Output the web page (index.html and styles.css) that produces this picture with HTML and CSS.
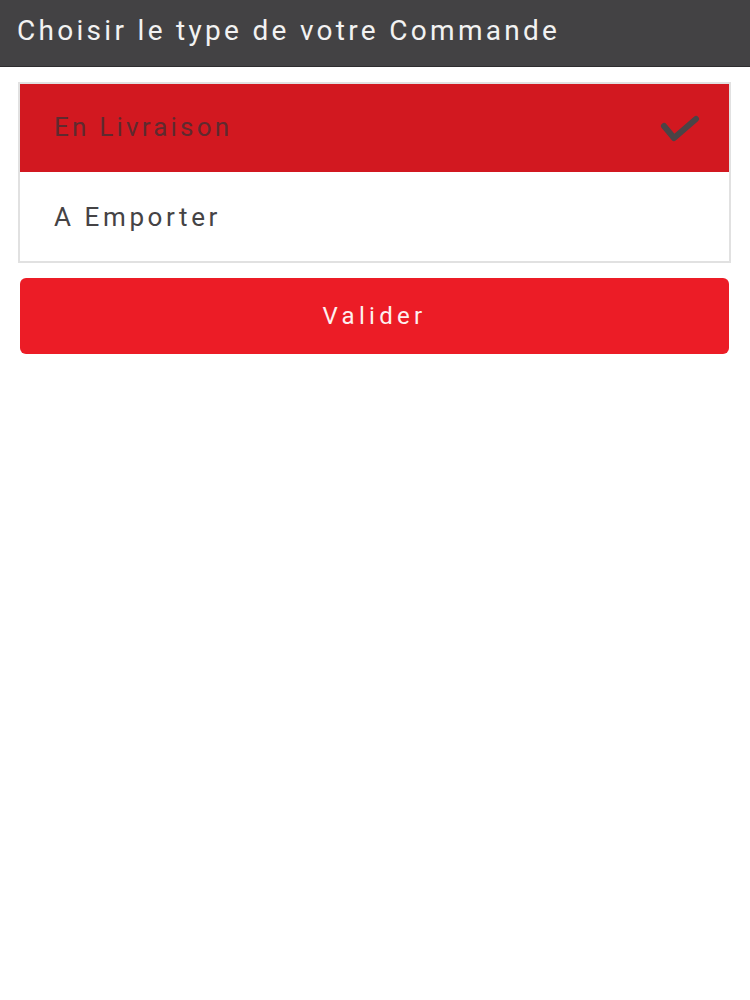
FILE: index.html
```html
<!DOCTYPE html>
<html lang="fr">
<head>
<meta charset="utf-8">
<title>Choisir le type de votre Commande</title>
<link rel="stylesheet" href="styles.css">
</head>
<body>
<header class="topbar">
  <h1 class="topbar-title">Choisir le type de votre Commande</h1>
</header>
<main class="content">
  <ul class="choice-list">
    <li class="choice choice-selected">
      <span class="choice-label">En Livraison</span>
      <svg class="choice-check" width="40" height="32" viewBox="0 0 40 32" aria-hidden="true">
        <polyline points="4,13 14,25 36,6" fill="none" stroke="#4a4446" stroke-width="6" stroke-linecap="round" stroke-linejoin="round"/>
      </svg>
    </li>
    <li class="choice">
      <span class="choice-label">A Emporter</span>
    </li>
  </ul>
  <button class="validate-btn" type="button">Valider</button>
</main>
</body>
</html>
```

FILE: styles.css
```css
html, body {
  margin: 0;
  padding: 0;
  background: #ffffff;
}

body {
  font-family: Roboto, "Liberation Sans", Arial, sans-serif;
}

.topbar {
  height: 66px;
  background: #434244;
  border-bottom: 1px solid #2e2d2f;
  display: flex;
  align-items: center;
  padding: 0 17px;
}

.topbar-title {
  margin: 0;
  font-size: 28px;
  font-weight: 400;
  color: #f2f2f2;
  letter-spacing: 3.3px;
  line-height: 1;
  padding-bottom: 5px;
}

.content {
  padding: 15px 19px 0 18px;
}

.choice-list {
  list-style: none;
  margin: 0;
  padding: 0;
  border: 2px solid #e1e1e1;
}

.choice {
  height: 89px;
  display: flex;
  align-items: center;
  justify-content: space-between;
  padding: 0 29px 0 34px;
  box-sizing: border-box;
  background: #ffffff;
}

.choice-selected {
  height: 88px;
  background: #d21820;
}

.choice-label {
  font-size: 26px;
  letter-spacing: 3.6px;
  color: #454345;
}

.choice-selected .choice-label {
  color: #5f2a2f;
  letter-spacing: 3.2px;
  margin-top: -2px;
}

.choice-check {
  display: block;
  margin-top: 2px;
}

.validate-btn {
  display: block;
  width: calc(100% - 4px);
  margin: 15px 2px 0;
  height: 76px;
  border: none;
  border-radius: 6px;
  background: #ec1c26;
  color: #fdf0f0;
  font-family: Roboto, "Liberation Sans", Arial, sans-serif;
  font-size: 24px;
  letter-spacing: 4.3px;
  cursor: pointer;
  padding: 0;
}
```
